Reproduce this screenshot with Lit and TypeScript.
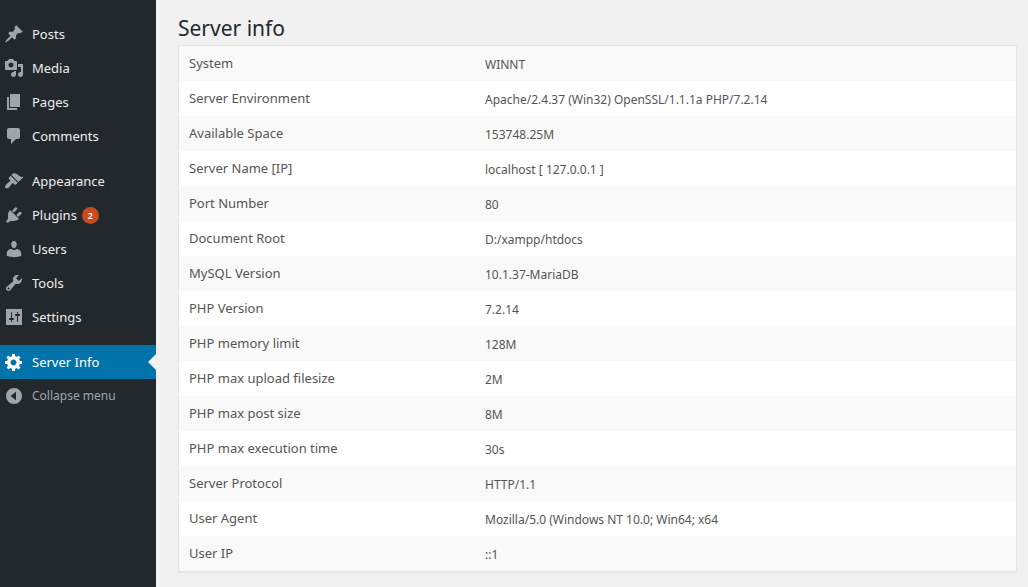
import { LitElement, html, css, svg, nothing } from "lit";
import { customElement, property } from "lit/decorators.js";
import { classMap } from "lit/directives/class-map.js";

const ICONS: Record<string, string> = {
  post: "M10.44 3.02l1.82-1.82 6.36 6.35-1.83 1.82c-1.05-.68-2.48-.57-3.41.36l-.75.75c-.92.93-1.04 2.35-.35 3.41l-1.83 1.82-2.41-2.41-2.8 2.79c-.42.42-3.38 2.71-3.8 2.29s1.86-3.39 2.28-3.81l2.79-2.79L4.1 9.36l1.83-1.82c1.05.69 2.48.57 3.4-.36l.75-.75c.93-.92 1.05-2.35.36-3.41z",
  media: "M13 11V4c0-.55-.45-1-1-1h-1.67L9 1H5L3.67 3H2c-.55 0-1 .45-1 1v7c0 .55.45 1 1 1h10c.55 0 1-.45 1-1zM7 4.5c1.38 0 2.5 1.12 2.5 2.5S8.38 9.5 7 9.5 4.5 8.38 4.5 7 5.62 4.5 7 4.5zM14 6h5v10.5c0 1.38-1.12 2.5-2.5 2.5S14 17.88 14 16.5s1.12-2.5 2.5-2.5c.17 0 .34.02.5.05V9h-3V6zm-4 8.05V13h2v3.5c0 1.38-1.12 2.5-2.5 2.5S7 17.88 7 16.5 8.12 14 9.5 14c.17 0 .34.02.5.05z",
  page: "M6 15V2h10v13H6zm-1 1h8v2H3V5h2v11z",
  comments: "M5 2h9c1.1 0 2 .9 2 2v7c0 1.1-.9 2-2 2h-2l-5 5v-5H5c-1.1 0-2-.9-2-2V4c0-1.1.9-2 2-2z",
  appearance: "M14.48 11.06L7.41 3.99l1.5-1.5c.5-.56 2.3-.47 3.51.32 1.21.8 1.43 1.28 2.91 2.1 1.18.64 2.45 1.26 4.45.85zm-.71.71L6.7 4.7 4.93 6.47c-.39.39-.39 1.02 0 1.41l1.06 1.06c.39.39.39 1.03 0 1.42-.6.6-1.43 1.11-2.21 1.69-.35.26-.7.53-1.01.84C1.43 14.23.4 16.08 1.4 17.07c.99 1 2.84-.03 4.18-1.36.31-.31.58-.66.85-1.02.57-.78 1.08-1.61 1.69-2.21.39-.39 1.02-.39 1.41 0l1.06 1.06c.39.39 1.02.39 1.41 0z",
  plugins: "M13.11 4.36L9.87 7.6 8 5.73l3.24-3.24c.35-.34 1.05-.2 1.56.32.52.51.66 1.21.31 1.55zm-8 1.77l.91-1.12 9.01 9.01-1.19.84c-.71.71-2.63 1.16-3.82 1.16H6.14L4.9 17.26c-.59.59-1.54.59-2.12 0-.59-.58-.59-1.53 0-2.12l1.24-1.24v-3.88c0-1.13.4-3.19 1.09-3.89zm7.26 3.97l3.24-3.24c.34-.35 1.04-.21 1.55.31.52.51.66 1.21.31 1.55l-3.24 3.25z",
  users: "M10 9.25c-2.27 0-2.73-3.44-2.73-3.44C7 4.02 7.82 2 9.97 2c2.16 0 2.98 2.02 2.71 3.81 0 0-.41 3.44-2.68 3.44zM7.3 10L10 11.2 12.72 10c2.39 0 4.52 2.33 4.52 4.53v2.49s-3.65 1.13-7.24 1.13c-3.65 0-7.24-1.13-7.24-1.13v-2.49c0-2.25 1.94-4.53 4.54-4.53z",
  tools: "M16.68 9.77c-1.34 1.34-3.3 1.67-4.95.99l-5.41 6.52c-.99.99-2.59.99-3.58 0s-.99-2.59 0-3.57l6.52-5.42c-.68-1.65-.35-3.61.99-4.95 1.28-1.28 3.12-1.62 4.72-1.06l-2.89 2.89 2.82 2.82 2.86-2.87c.53 1.58.18 3.39-1.08 4.65zM3.81 16.21c.4.39 1.04.39 1.43 0 .4-.4.4-1.04 0-1.43-.39-.4-1.03-.4-1.43 0-.39.39-.39 1.03 0 1.43z",
  settings: "M18 18V2H2v16h16zM8 11h1c.55 0 1 .45 1 1s-.45 1-1 1H8v1.5c0 .28-.22.5-.5.5s-.5-.22-.5-.5V13H6c-.55 0-1-.45-1-1s.45-1 1-1h1V5.5c0-.28.22-.5.5-.5s.5.22.5.5V11zm5-2h-1c-.55 0-1-.45-1-1s.45-1 1-1h1V5.5c0-.28.22-.5.5-.5s.5.22.5.5V7h1c.55 0 1 .45 1 1s-.45 1-1 1h-1v5.5c0 .28-.22.5-.5.5s-.5-.22-.5-.5V9z",
  generic: "M18 12h-2.18c-.17.7-.44 1.35-.81 1.93l1.54 1.54-2.1 2.1-1.54-1.54c-.58.36-1.23.63-1.91.79V19H8v-2.18c-.68-.16-1.33-.43-1.91-.79l-1.54 1.54-2.12-2.12 1.54-1.54c-.36-.58-.63-1.23-.79-1.91H1V9.03h2.17c.16-.7.44-1.35.8-1.94L2.43 5.55l2.1-2.1 1.54 1.54c.58-.37 1.24-.64 1.93-.81V2h3v2.18c.68.16 1.33.43 1.91.79l1.54-1.54 2.12 2.12-1.54 1.54c.36.59.64 1.24.8 1.94H18V12zm-8.5 1.5c1.66 0 3-1.34 3-3s-1.34-3-3-3-3 1.34-3 3 1.34 3 3 3z",
  collapse: "M10 2a8 8 0 1 0 0 16a8 8 0 1 0 0-16zM12 14.2V5.8L6.6 10z",
};

interface MenuItem {
  label: string;
  icon: string;
  count?: number;
  current?: boolean;
}

const MENU: MenuItem[][] = [
  [
    { label: "Posts", icon: "post" },
    { label: "Media", icon: "media" },
    { label: "Pages", icon: "page" },
    { label: "Comments", icon: "comments" },
  ],
  [
    { label: "Appearance", icon: "appearance" },
    { label: "Plugins", icon: "plugins", count: 2 },
    { label: "Users", icon: "users" },
    { label: "Tools", icon: "tools" },
    { label: "Settings", icon: "settings" },
  ],
  [{ label: "Server Info", icon: "generic", current: true }],
];

const INFO: [string, string][] = [
  ["System", "WINNT"],
  ["Server Environment", "Apache/2.4.37 (Win32) OpenSSL/1.1.1a PHP/7.2.14"],
  ["Available Space", "153748.25M"],
  ["Server Name [IP]", "localhost [ 127.0.0.1 ]"],
  ["Port Number", "80"],
  ["Document Root", "D:/xampp/htdocs"],
  ["MySQL Version", "10.1.37-MariaDB"],
  ["PHP Version", "7.2.14"],
  ["PHP memory limit", "128M"],
  ["PHP max upload filesize", "2M"],
  ["PHP max post size", "8M"],
  ["PHP max execution time", "30s"],
  ["Server Protocol", "HTTP/1.1"],
  ["User Agent", "Mozilla/5.0 (Windows NT 10.0; Win64; x64"],
  ["User IP", "::1"],
];

const icon = (name: string) => html`
  <svg class="icon" viewBox="0 0 20 20" aria-hidden="true">
    ${svg`<path fill-rule="evenodd" d=${ICONS[name]} />`}
  </svg>
`;

@customElement("admin-menu")
export class AdminMenu extends LitElement {
  static styles = css`
    :host {
      display: block;
      background: #23282d;
      font-size: 13px;
      line-height: 18px;
    }
    .menu {
      display: flex;
      flex-direction: column;
      gap: 11px;
      padding-top: 17px;
    }
    .group {
      list-style: none;
      margin: 0;
      padding: 0;
    }
    .item {
      position: relative;
      box-sizing: border-box;
      display: flex;
      align-items: center;
      gap: 8px;
      width: 100%;
      min-height: 34px;
      margin: 0;
      padding: 0 4px;
      border: 0;
      background: none;
      color: #eee;
      font: inherit;
      text-align: left;
      text-decoration: none;
      cursor: pointer;
    }
    .item:hover {
      color: #00b9eb;
    }
    .icon {
      flex: none;
      width: 20px;
      height: 20px;
      fill: #a0a5aa;
    }
    .current,
    .current:hover {
      background: #0073aa;
      color: #fff;
    }
    .current .icon {
      fill: #fff;
    }
    .current::after {
      content: "";
      position: absolute;
      right: 0;
      top: 50%;
      margin-top: -8px;
      border: 8px solid transparent;
      border-left-width: 0;
      border-right-color: #f1f1f1;
    }
    .collapse {
      color: #a0a5aa;
      font-size: 12px;
    }
    .count {
      min-width: 17px;
      border-radius: 9px;
      background: #ca4a1f;
      color: #fff;
      font-size: 9px;
      font-weight: 600;
      line-height: 17px;
      text-align: center;
    }
    .label {
      display: flex;
      align-items: center;
      gap: 5px;
    }
  `;

  @property({ attribute: false }) groups: MenuItem[][] = [];

  render() {
    return html`
      <nav class="menu" aria-label="Main menu">
        ${this.groups.map(
          (group) => html`
            <ul class="group">
              ${group.map(
                (item) => html`
                  <li>
                    <a
                      class=${classMap({ item: true, current: !!item.current })}
                      href="#"
                      aria-current=${item.current ? "page" : nothing}
                    >
                      ${icon(item.icon)}
                      <span class="label">
                        ${item.label}
                        ${item.count ? html`<span class="count">${item.count}</span>` : nothing}
                      </span>
                    </a>
                  </li>
                `
              )}
            </ul>
          `
        )}
      </nav>
      <button class="item collapse" type="button">${icon("collapse")}<span>Collapse menu</span></button>
    `;
  }
}

@customElement("app-root")
export class AppRoot extends LitElement {
  static styles = css`
    :host {
      display: grid;
      grid-template-columns: 156px minmax(0, 1fr);
      min-height: 100vh;
      background: #f1f1f1;
      color: #555;
      font-family: "Segoe UI", "Noto Sans", "Open Sans", sans-serif;
    }
    .content {
      padding: 12px 11px 14px 22px;
    }
    .title {
      margin: 0;
      padding-bottom: 1px;
      color: #23282d;
      font-size: 21px;
      font-weight: 400;
      line-height: 32px;
    }
    .info {
      width: 100%;
      border: 1px solid #e5e5e5;
      border-spacing: 0;
      background: #fff;
      box-shadow: 0 1px 1px rgba(0, 0, 0, 0.04);
      text-align: left;
    }
    .row:nth-child(odd) {
      background: #f9f9f9;
    }
    .name,
    .value {
      padding: 8px 10px 9px;
      font-weight: 400;
      line-height: 18px;
      vertical-align: top;
    }
    .name {
      width: 276px;
      font-size: 13px;
    }
    .value {
      padding: 10px 10px 7px;
      font-size: 12px;
    }
  `;

  render() {
    return html`
      <admin-menu .groups=${MENU}></admin-menu>
      <main class="content">
        <h1 class="title">Server info</h1>
        <table class="info">
          <tbody>
            ${INFO.map(
              ([name, value]) => html`
                <tr class="row">
                  <th class="name" scope="row">${name}</th>
                  <td class="value">${value}</td>
                </tr>
              `
            )}
          </tbody>
        </table>
      </main>
    `;
  }
}
